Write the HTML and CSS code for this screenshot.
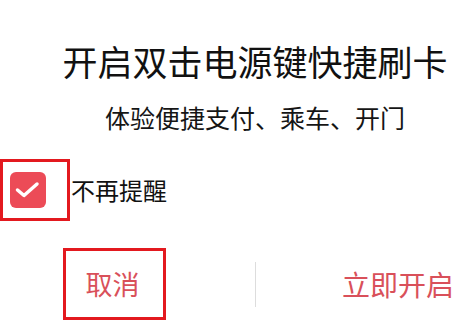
FILE: index.html
```html
<!DOCTYPE html>
<html lang="zh-CN">
<head>
    <meta charset="UTF-8">
    <meta name="viewport" content="width=device-width, initial-scale=1.0">
    <title>开启双击电源键快捷刷卡</title>
    <link rel="stylesheet" href="styles.css">
</head>
<body>
    <div class="dialog">
        <div class="head">
            <h1 class="title">开启双击电源键快捷刷卡</h1>
            <p class="subtitle">体验便捷支付、乘车、开门</p>
        </div>

        <label class="remember">
            <span class="mark-box">
                <span class="check">
                    <svg width="36" height="36" viewBox="0 0 36 36">
                        <polyline points="7.5,18 14,23.5 27,12" fill="none" stroke="#fff" stroke-width="3.5" stroke-linecap="round" stroke-linejoin="round"/>
                    </svg>
                </span>
            </span>
            <span class="remember-text">不再提醒</span>
        </label>

        <div class="actions">
            <button class="btn btn-cancel" type="button">取消</button>
            <span class="divider"></span>
            <button class="btn btn-ok" type="button">立即开启</button>
        </div>
    </div>
</body>
</html>
```

FILE: styles.css
```css
body {
    margin: 0;
    width: 469px;
    height: 320px;
    overflow: hidden;
    background-color: #fff;
    font-family: "Noto Sans CJK SC", sans-serif;
    color: #111;
}
.head {
    padding-left: 41px;
    text-align: center;
}
.title {
    margin: 0;
    padding-top: 41px;
    font-size: 35px;
    line-height: 40px;
    font-weight: 400;
}
.subtitle {
    margin: 20px 0 0 0;
    font-size: 25px;
    line-height: 32px;
    color: #151515;
}
.remember {
    display: flex;
    align-items: center;
    margin-top: 26px;
}
.mark-box {
    display: flex;
    align-items: center;
    box-sizing: border-box;
    width: 70px;
    height: 62px;
    padding-left: 7px;
    border: 3px solid #e3191f;
}
.check {
    display: block;
    width: 36px;
    height: 36px;
    border-radius: 6px;
    background-color: #ec4b57;
}
.check svg {
    display: block;
}
.remember-text {
    margin-left: 1px;
    font-size: 24px;
    line-height: 24px;
}
.actions {
    display: flex;
    align-items: center;
    margin-top: 27px;
    height: 72px;
}
.btn {
    background: none;
    border: none;
    padding: 0;
    font-family: inherit;
    font-size: 27px;
    line-height: 30px;
    color: #d9505a;
    cursor: pointer;
}
.btn-cancel {
    box-sizing: border-box;
    width: 103px;
    height: 72px;
    margin-left: 63px;
    padding-right: 4px;
    border: 3px solid #e3191f;
}
.divider {
    width: 1px;
    height: 45px;
    margin-left: 89px;
    background-color: #ddd;
}
.btn-ok {
    margin-left: 86px;
    font-size: 28px;
}
```
